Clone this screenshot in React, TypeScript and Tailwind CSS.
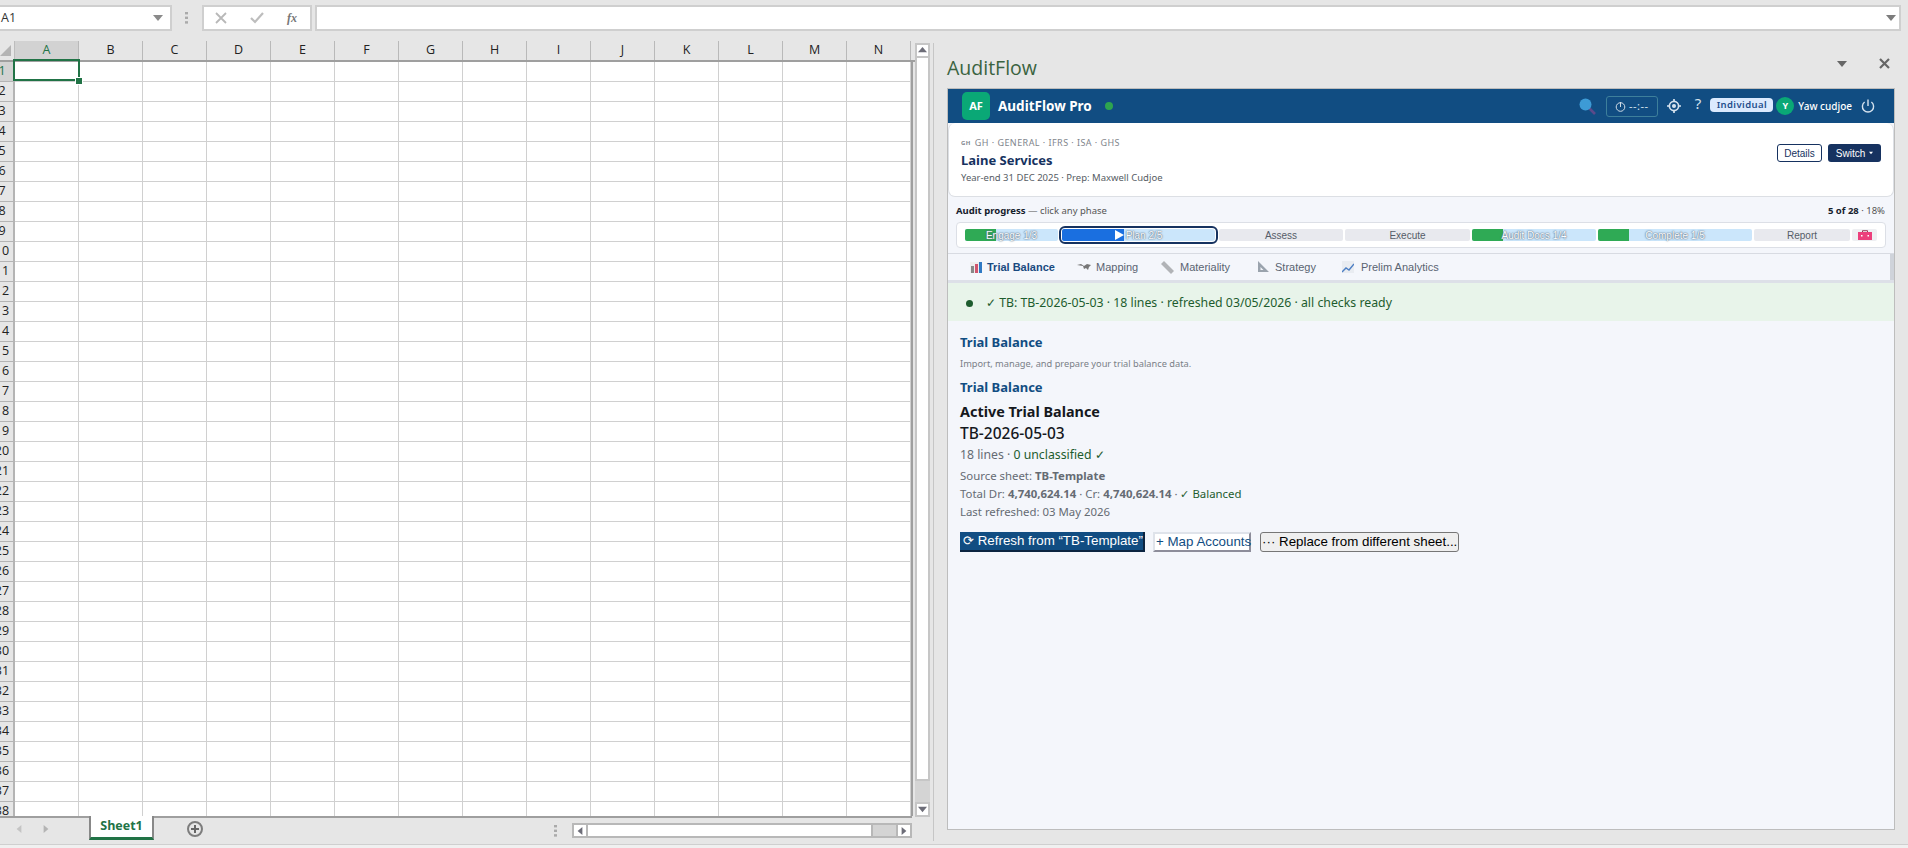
import React from "react";

const cols = ["A","B","C","D","E","F","G","H","I","J","K","L","M","N"];
const rows = Array.from({ length: 38 }, (_, i) => i + 1);

function Tri({ d, c = "#6d6d78", s = 7 }: { d: "up"|"down"|"left"|"right"; c?: string; s?: number }) {
  const p = { up: "0,7 10,7 5,1", down: "0,2 10,2 5,8", left: "8,0 8,10 2,5", right: "2,0 2,10 8,5" }[d];
  return <svg viewBox="0 0 10 10" width={s+3} height={s+3}><polygon points={p} fill={c} /></svg>;
}

function FormulaBar() {
  return (
    <div className="h-[41px] shrink-0 flex items-start pt-[5px] font-['Open_Sans']">
      <div className="w-[172px] h-[26px] bg-white border-2 border-l-0 border-[#cfcfcf] flex items-center justify-between pl-[1px] pr-[7px] text-[12.5px] text-[#333]">
        <span>A1</span>
        <Tri d="down" c="#8a8a8a" />
      </div>
      <div className="w-[30px] h-[26px] flex items-center justify-center">
        <svg width="4" height="12"><rect y="0" width="3" height="2.4" fill="#aaa"/><rect y="4.6" width="3" height="2.4" fill="#aaa"/><rect y="9.2" width="3" height="2.4" fill="#aaa"/></svg>
      </div>
      <div className="w-[110px] h-[26px] bg-white border-2 border-[#cfcfcf] flex items-center pl-[11px]">
        <svg width="12" height="12" viewBox="0 0 12 12"><path d="M1 1l10 10M11 1L1 11" stroke="#b8b8b8" strokeWidth="1.8"/></svg>
        <svg className="ml-[23px]" width="14" height="12" viewBox="0 0 14 12"><path d="M1 6l4 4 8-9" stroke="#bdbdbd" strokeWidth="2.2" fill="none"/></svg>
        <span className="ml-[23px] text-[12px] italic font-semibold text-[#777] font-['Liberation_Serif']">fx</span>
      </div>
      <div className="w-[3px]" />
      <div className="w-[1586px] h-[26px] bg-white border-2 border-[#cfcfcf] flex items-center justify-end pr-[3px]">
        <Tri d="down" c="#7c7c7c" />
      </div>
    </div>
  );
}

function Grid() {
  return (
    <div className="w-[915px] h-[775px] overflow-hidden relative font-['Open_Sans'] text-[12.5px]">
      <div className="flex h-[19px] border-b-2 border-[#9f9f9f] box-content">
        <div className="w-[15px] h-[19px] shrink-0 flex items-end justify-end pb-[4px] pr-[3px] border-r border-[#bdbdbd]">
          <svg width="11" height="11"><polygon points="11,0 11,11 0,11" fill="#b4b4b4"/></svg>
        </div>
        {cols.map((c, i) => (
          <div key={c} className={`w-[64px] h-[19px] shrink-0 flex items-center justify-center text-[#222] border-r border-[#b9b9b9] ${i === 0 ? "bg-[#d2d2d2] text-[#217346]" : ""}`}>{c}</div>
        ))}
      </div>
      {rows.map((r) => (
        <div key={r} className="flex h-[20px]">
          <div className={`w-[15px] shrink-0 overflow-hidden border-r-2 border-b border-[#b4b4b4] flex items-center ${r === 1 ? "bg-[#d2d2d2] text-[#217346]" : "text-[#222]"}`}>
            <span className="w-[26px] ml-[-11px] shrink-0 text-center">{r}</span>
          </div>
          {cols.map((c) => (
            <div key={c} className="w-[64px] shrink-0 bg-white border-r border-b border-[#d0d0d0]" />
          ))}
        </div>
      ))}
      <div className="absolute left-[13px] top-[18px] w-[67px] h-[22px] border-2 border-[#217346]" />
      <div className="absolute left-[75px] top-[36px] w-[6px] h-[6px] bg-[#217346] border border-white box-content" />
      <div className="absolute left-[911px] top-[19px] w-[2px] h-[756px] bg-[#9f9f9f]" />
    </div>
  );
}

function VScroll() {
  return (
    <div className="w-[18px] h-[775px] flex flex-col pt-[2px]">
      <div className="w-[15px] h-[15px] bg-white border-2 border-[#c6c6c6] flex items-center justify-center shrink-0"><Tri d="up" s={6}/></div>
      <div className="w-[15px] h-[723px] bg-white border-2 border-[#c6c6c6] border-t-0 shrink-0" />
      <div className="w-[15px] h-[21px] bg-[#d4d4d4] shrink-0" />
      <div className="w-[15px] h-[15px] bg-white border-2 border-[#c6c6c6] flex items-center justify-center shrink-0"><Tri d="down" s={6}/></div>
    </div>
  );
}

function SheetTabs() {
  return (
    <div className="h-[28px] w-[933px] flex items-start font-['Open_Sans']">
      <div className="w-[89px] h-[24px] flex items-center pl-[15px] gap-[19px] border-t-2 border-[#9f9f9f]">
        <Tri d="left" c="#c4c4c4" s={5} /><Tri d="right" c="#b4b4b4" s={5} />
      </div>
      <div className="w-[65px] h-[24px] bg-white border-x-2 border-b-[3px] border-[#888] border-b-[#217346] flex items-center justify-center text-[12.5px] font-bold text-[#217346]">Sheet1</div>
      <div className="w-[758px] h-[24px] flex border-t-2 border-[#9f9f9f]">
        <div className="ml-[33px] mt-[3px] w-[16px] h-[16px] rounded-full border-2 border-[#7d7d7d] flex items-center justify-center">
          <svg width="8" height="8"><path d="M4 0v8M0 4h8" stroke="#666" strokeWidth="2"/></svg>
        </div>
        <div className="ml-[351px] mt-[7px]">
          <svg width="4" height="12"><rect width="3" height="2.4" fill="#aaa"/><rect y="4.6" width="3" height="2.4" fill="#aaa"/><rect y="9.2" width="3" height="2.4" fill="#aaa"/></svg>
        </div>
        <div className="ml-[14px] mt-[5px] w-[340px] h-[15px] flex bg-[#d4d4d4] border-2 border-[#b8b8b8]">
          <div className="w-[14px] bg-white border-r-2 border-[#b8b8b8] flex items-center justify-center"><Tri d="left" s={5}/></div>
          <div className="w-[285px] bg-white border-r-2 border-[#b8b8b8]" />
          <div className="flex-1" />
          <div className="w-[14px] bg-white border-l-2 border-[#b8b8b8] flex items-center justify-center"><Tri d="right" s={5}/></div>
        </div>
      </div>
    </div>
  );
}

function Seg({ w, label, fill, tone, outline, play }: { w: number; label: string; fill?: number; tone?: string; outline?: boolean; play?: boolean }) {
  const done = fill !== undefined;
  return (
    <div style={{ width: w }} className={`relative h-[12px] shrink-0 rounded-[2px] flex items-center justify-center text-[10px] font-['Liberation_Sans'] ${done ? "bg-[#cbe6fb]" : "bg-[#e8e9ee] text-[#555c68]"} ${outline ? "outline-2 outline-offset-[1px] outline-[#163260] rounded-[3px]" : ""}`}>
      {done && <div style={{ width: fill }} className={`absolute left-0 top-0 bottom-0 rounded-l-[2px] ${tone}`} />}
      {play && <svg className="relative mr-[2px]" width="9" height="10"><polygon points="0,0 9,5 0,10" fill="#fff" /></svg>}
      <span className={`relative ${done ? "text-[#fafcff] [text-shadow:0_0_2px_#54697d,0_0_1px_#54697d]" : ""}`}>{label}</span>
    </div>
  );
}

function TabIcon({ kind }: { kind: string }) {
  if (kind === "chart") return <svg width="12" height="12"><rect x="0" y="1" width="12" height="11" fill="#eee"/><rect x="1" y="5" width="3" height="7" fill="#888"/><rect x="5" y="3" width="3" height="9" fill="#d0556e"/><rect x="9" y="1" width="3" height="11" fill="#2f79c4"/></svg>;
  if (kind === "map") return <svg width="14" height="8"><path d="M0 2l4-1 3 2 3-2 4 1-2 2-1 3-2-2-2 1-1-3z" fill="#777"/></svg>;
  if (kind === "ruler") return <svg width="13" height="13"><path d="M3 0l10 10-3 3L0 3z" fill="#b1b3b7"/></svg>;
  if (kind === "tri") return <svg width="12" height="12"><path d="M1 0v11h11zM3.5 6v3h3z" fill="#9aa3ad" fillRule="evenodd"/></svg>;
  return <svg width="12" height="12"><rect width="12" height="12" fill="#e9ecf1"/><path d="M0 11l4-4 3 2 5-6" stroke="#4d7fc4" strokeWidth="1.4" fill="none"/></svg>;
}

function Pane() {
  return (
    <div className="w-[974px] h-[803px] flex flex-col pl-[13px] pr-[13px] font-['Noto_Sans'] relative">
      <div className="h-[47px] shrink-0 flex items-start justify-between pt-[13px]">
        <span className="text-[19.5px] text-[#3a6340] font-['Open_Sans'] leading-[27px]">AuditFlow</span>
        <div className="flex items-center gap-[32px] pr-[5px] pt-[4px]">
          <Tri d="down" c="#666" s={7} />
          <svg width="11" height="11"><path d="M1 1l9 9M10 1l-9 9" stroke="#666" strokeWidth="2.2"/></svg>
        </div>
      </div>
      <div className="h-[742px] w-[948px] border border-[#bdbdbd] bg-[#f4f6fb] flex flex-col overflow-hidden">
        <div className="h-[34px] shrink-0 bg-[#114d82] flex items-center pl-[14px] pr-[19px] text-white">
          <div className="w-[28px] h-[28px] rounded-[5px] bg-[#0aa876] flex items-center justify-center text-[11px] font-bold">AF</div>
          <span className="ml-[8px] text-[13.5px] font-bold">AuditFlow Pro</span>
          <span className="ml-[13px] w-[8px] h-[8px] rounded-full bg-[#2ea44f]" />
          <div className="flex-1" />
          <svg width="17" height="17" viewBox="0 0 17 17"><path d="M10 10l6 6" stroke="#5b4a8a" strokeWidth="2.6"/><circle cx="6.5" cy="6.5" r="6" fill="#3d9bd6"/></svg>
          <div className="ml-[10px] w-[52px] h-[21px] border border-[#3d7f9b] rounded-[3px] flex items-center justify-center gap-[3px] text-[#cfe0ee] text-[11px]">
            <svg width="11" height="11" viewBox="0 0 11 11" fill="none" stroke="#cfdbe6"><circle cx="5.5" cy="6" r="4.3"/><path d="M5.5 1v5"/></svg>
            <span className="tracking-[0.5px]">--:--</span>
          </div>
          <svg className="ml-[9px]" width="14" height="14" viewBox="0 0 14 14" fill="none" stroke="#d5e2ee" strokeWidth="1.7"><circle cx="7" cy="7" r="4.6"/><circle cx="7" cy="7" r="1.2" fill="#d5e2ee"/><path d="M7 0v2M7 12v2M0 7h2M12 7h2"/></svg>
          <span className="ml-[14px] text-[15px] text-[#d5e2ee] leading-none mt-[-5px]">?</span>
          <span className="ml-[9px] w-[63px] h-[14px] bg-[#dbeafe] rounded-[4px] text-[9.5px] font-semibold text-[#1e4e8c] flex items-center justify-center tracking-[0.4px] mt-[-2px]">Individual</span>
          <span className="ml-[3px] w-[18px] h-[18px] rounded-full bg-[#0aa876] text-[9px] font-bold flex items-center justify-center">Y</span>
          <span className="ml-[4px] text-[10px] font-medium">Yaw cudjoe</span>
          <svg className="ml-[9px]" width="14" height="14" viewBox="0 0 14 14" fill="none" stroke="#d5e2ee" strokeWidth="1.4"><path d="M7 0.5v6.5M3.6 3a5.6 5.6 0 1 0 6.8 0"/></svg>
        </div>
        <div className="h-[74px] shrink-0 bg-white rounded-[7px] border-b border-x border-[#dcdfe4] flex justify-between pl-[12px] pr-[12px]">
          <div className="flex flex-col">
            <div className="mt-[13px] h-[14px] flex items-center text-[9px] text-[#7f858c] tracking-[0.45px]"><span className="text-[6px] font-bold mr-[4px] mt-[1px]">GH</span>GH · GENERAL · IFRS · ISA · GHS</div>
            <div className="mt-[1px] text-[13px] font-bold text-[#163260] leading-[18px]">Laine Services</div>
            <div className="mt-[2px] text-[9.5px] text-[#565c64] leading-[14px]">Year-end 31 DEC 2025 · Prep: Maxwell Cudjoe</div>
          </div>
          <div className="flex gap-[6px] pt-[21px] font-['Liberation_Sans'] text-[10px]">
            <div className="w-[45px] h-[18px] rounded-[3px] border border-[#163260] text-[#163260] flex items-center justify-center">Details</div>
            <div className="w-[53px] h-[18px] rounded-[3px] bg-[#163260] text-white flex items-center justify-center gap-[4px]">Switch <Tri d="down" c="#fff" s={1} /></div>
          </div>
        </div>
        <div className="h-[57px] shrink-0 px-[8px] border-b border-[#d8dbe2]">
          <div className="h-[25px] flex justify-between items-center pt-[3px] text-[9.5px] text-[#555] pr-[1px]">
            <span><b className="text-[#15202c]">Audit progress</b> — click any phase</span>
            <span><b className="text-[#15202c]">5 of 28</b> · 18%</span>
          </div>
          <div className="h-[26px] bg-white border border-[#dcdfe6] rounded-[4px] flex items-center pl-[8px]">
            <Seg w={93} label="Engage 1/3" fill={31} tone="bg-[#2faa55]" />
            <div className="w-[4px] shrink-0" />
            <Seg w={153} label="Plan 2/5" fill={62} tone="bg-[#1a6fe0]" outline play />
            <div className="w-[4px] shrink-0" />
            <div className="flex items-center gap-[2px]">
              <Seg w={124} label="Assess" />
              <Seg w={125} label="Execute" />
              <Seg w={124} label="Audit Docs 1/4" fill={31} tone="bg-[#2faa55]" />
              <Seg w={154} label="Complete 1/5" fill={31} tone="bg-[#2faa55]" />
              <Seg w={96} label="Report" />
              <div className="w-[25px] h-[12px] bg-[#eeeff2] rounded-[2px] flex items-center justify-center">
                <svg width="14" height="10" viewBox="0 0 14 10"><path d="M4.5 2V.7h5V2" stroke="#9b3a57" fill="none"/><rect y="2" width="14" height="8" fill="#ec3f7c"/><rect x="3" y="5" width="1.5" height="1.5" fill="#fff"/><rect x="9.5" y="5" width="1.5" height="1.5" fill="#fff"/></svg>
              </div>
            </div>
          </div>
        </div>
        <div className="h-[29px] shrink-0 relative flex items-center pl-[22px] text-[11px] font-['Liberation_Sans'] text-[#5a6472] border-b-[3px] border-[#dde0e8]">
          <TabIcon kind="chart" /><span className="ml-[5px] w-[81px] font-bold text-[#1a4a80]">Trial Balance</span>
          <span className="ml-[9px]"><TabIcon kind="map" /></span><span className="ml-[5px] w-[65px]">Mapping</span>
          <TabIcon kind="ruler" /><span className="ml-[6px] w-[63px]">Materiality</span>
          <span className="ml-[14px]"><TabIcon kind="tri" /></span><span className="ml-[6px] w-[60px]">Strategy</span>
          <span className="ml-[7px]"><TabIcon kind="line" /></span><span className="ml-[7px]">Prelim Analytics</span>
          <div className="absolute right-0 top-0 w-[4px] h-[26px] bg-[#cfd3da]" />
        </div>
        <div className="h-[38px] shrink-0 bg-[#e8f4ea] flex items-center pl-[18px] pt-[2px] text-[12.3px] text-[#1d5c2e]">
          <span className="w-[7px] h-[7px] rounded-full bg-[#1d5c2e] mr-[13px]" />
          <span>✓ TB: TB-2026-05-03 · 18 lines · refreshed 03/05/2026 · all checks ready</span>
        </div>
        <div className="flex flex-col pl-[12px] pt-[12px]">
          <div className="h-[18px] text-[13px] font-bold text-[#114d82] leading-[18px]">Trial Balance</div>
          <div className="mt-[7px] h-[12px] text-[9.25px] text-[#7a7f87] leading-[12px]">Import, manage, and prepare your trial balance data.</div>
          <div className="mt-[8px] h-[18px] text-[13px] font-bold text-[#114d82] leading-[18px]">Trial Balance</div>
          <div className="mt-[6px] h-[19px] text-[14.4px] font-bold text-[#15181d] leading-[19px]">Active Trial Balance</div>
          <div className="mt-[2px] h-[20px] text-[15.5px] font-medium text-[#15181d] leading-[20px]">TB-2026-05-03</div>
          <div className="mt-[3px] h-[18px] text-[12.25px] text-[#656b73] leading-[18px]">18 lines · <span className="text-[#1d5c2e]">0 unclassified ✓</span></div>
          <div className="mt-[3px] h-[17px] text-[11.4px] text-[#656b73] leading-[17px]">Source sheet: <b>TB-Template</b></div>
          <div className="mt-[1px] h-[18px] text-[11.4px] text-[#656b73] leading-[18px]">Total Dr: <b>4,740,624.14</b> · Cr: <b>4,740,624.14</b> · <span className="text-[#1d5c2e]">✓ Balanced</span></div>
          <div className="h-[18px] text-[11.4px] text-[#656b73] leading-[18px]">Last refreshed: 03 May 2026</div>
          <div className="mt-[11px] flex items-start font-['Liberation_Sans'] text-[13.33px]">
            <div className="w-[185px] h-[20px] bg-[#114d82] text-white border-r-2 border-b-2 border-[#0b2440] flex items-center pl-[3px] whitespace-nowrap">⟳ Refresh from “TB-Template”</div>
            <div className="ml-[8px] w-[98px] h-[20px] bg-white text-[#114d82] border-2 border-[#dfe3ea] border-r-[#8d8d9a] border-b-[#8d8d9a] flex items-center pl-[1px] whitespace-nowrap">+ Map Accounts</div>
            <div className="ml-[9px] w-[199px] h-[20px] bg-[#efefef] text-black border border-[#767676] rounded-[3px] flex items-center pl-[1px] whitespace-nowrap">··· Replace from different sheet...</div>
          </div>
        </div>
      </div>
    </div>
  );
}

export default function App() {
  return (
    <div className="w-[1908px] h-[848px] bg-[#e6e6e6] overflow-hidden flex flex-col">
      <FormulaBar />
      <div className="h-[803px] shrink-0 flex">
        <div className="w-[933px] shrink-0">
          <div className="flex">
            <Grid />
            <VScroll />
          </div>
          <SheetTabs />
        </div>
        <div className="w-[1px] h-[798px] mt-[2px] shrink-0 bg-[#c6c6c6]" />
        <Pane />
      </div>
      <div className="h-[4px] shrink-0 bg-[#f0f0f0] border-t border-[#cfcfcf]" />
    </div>
  );
}
